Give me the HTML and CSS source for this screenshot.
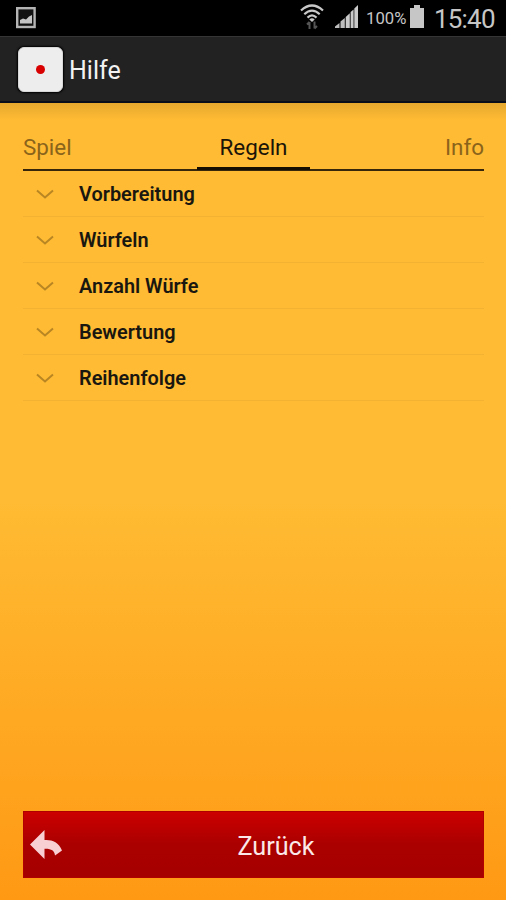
FILE: index.html
```html
<!DOCTYPE html>
<html lang="de">
<head>
    <meta charset="UTF-8">
    <meta name="viewport" content="width=device-width, initial-scale=1.0">
    <title>Hilfe</title>
    <link rel="stylesheet" href="styles.css">
</head>
<body>
    <div class="statusbar">
        <svg class="picture" width="20" height="22" viewBox="0 0 20 22">
            <rect x="1.2" y="1.2" width="17.4" height="18.8" fill="#111" stroke="#b4b4b4" stroke-width="2.4"/>
            <path d="M4 16.500V13l3-1.500 3 1 3-3 3-1.500v8.500z" fill="#c4c4c4"/>
        </svg>
        <div class="status-right">
            <svg class="wifi" width="24" height="26" viewBox="0 0 24 26">
                <g fill="none" stroke="#c8c8c8" stroke-width="2.200">
                    <path d="M1 6.500Q12-3.500 23 6.500"/>
                    <path d="M4.300 10.200Q12 3 19.700 10.200"/>
                    <path d="M7.500 13.600Q12 9.300 16.500 13.600"/>
                </g>
                <path d="M9.300 15.500Q12 13.200 14.700 15.500L12 18z" fill="#c8c8c8"/>
                <path d="M9.500 25v-7M7 20.500l2.500-2.500M14.500 17.500v7M17 22l-2.500 2.500" fill="none" stroke="#555" stroke-width="2"/>
            </svg>
            <svg class="signal" width="24" height="24" viewBox="0 0 24 24">
                <path d="M0 23v-1.500L4.500 18v5zM5.500 23v-6.500l4.300-3.500v10z" fill="#bdbdbd"/>
                <path d="M10.700 23V12l4.100-3.800V23zM15.600 23V7l3-2.600V23zM19.300 23V3.500L23 0v23z" fill="#cacaca"/>
            </svg>
            <span class="percent">100%</span>
            <svg class="battery" width="14" height="23" viewBox="0 0 14 23">
                <path d="M4 0h6v3h4v20H0V3h4z" fill="#c6c6c6"/>
            </svg>
            <span class="clock">15:40</span>
        </div>
    </div>

    <div class="header">
        <div class="dice"><span class="dot"></span></div>
        <span class="title">Hilfe</span>
    </div>

    <div class="content">
        <div class="tabs">
            <div class="tab">Spiel</div>
            <div class="tab active">Regeln</div>
            <div class="tab last">Info</div>
        </div>

        <ul class="list">
            <li><svg class="arrow" width="18" height="10" viewBox="0 0 18 10"><path d="M1 1.500l8 7 8-7"/></svg>Vorbereitung</li>
            <li><svg class="arrow" width="18" height="10" viewBox="0 0 18 10"><path d="M1 1.500l8 7 8-7"/></svg>Würfeln</li>
            <li><svg class="arrow" width="18" height="10" viewBox="0 0 18 10"><path d="M1 1.500l8 7 8-7"/></svg>Anzahl Würfe</li>
            <li><svg class="arrow" width="18" height="10" viewBox="0 0 18 10"><path d="M1 1.500l8 7 8-7"/></svg>Bewertung</li>
            <li><svg class="arrow" width="18" height="10" viewBox="0 0 18 10"><path d="M1 1.500l8 7 8-7"/></svg>Reihenfolge</li>
        </ul>

        <button class="back">
            <svg width="32" height="29" viewBox="0 0 32 29">
                <path d="M0 14.500L14.500 0v10C22 9.500 28.500 12 32 20.500L25 25.500C24.500 20.500 21 18.500 14.500 18.800V29z" fill="#f8d0d4"/>
            </svg>
            <span>Zurück</span>
        </button>
    </div>
</body>
</html>
```
FILE: styles.css
```css
*{
    box-sizing: border-box;
}

body{
    margin: 0;
    height: 900px;
    display: flex;
    flex-direction: column;
    font-family: Roboto, sans-serif;
    background-color: black;
}

.statusbar{
    height: 36px;
    padding: 0 11px 0 16px;
    display: flex;
    justify-content: space-between;
    color: #c6c6c6;
}

.picture{
    margin-top: 7px;
}

.status-right{
    display: flex;
}

.wifi{
    margin: 4px 11px 0 0;
}

.signal{
    margin: 5px 7px 0 0;
}

.percent{
    width: 41px;
    margin-right: 3px;
    font-size: 16.7px;
    line-height: 38px;
    white-space: nowrap;
}

.battery{
    margin: 5px 10px 0 0;
}

.clock{
    width: 61px;
    font-size: 26px;
    line-height: 38px;
    letter-spacing: -0.8px;
}

.header{
    height: 67px;
    padding: 1px 18px 0;
    display: flex;
    align-items: center;
    background-color: #222;
    border-top: 1px solid #353535;
    border-bottom: 2px solid #080d1c;
}

.dice{
    width: 45px;
    height: 45px;
    margin-right: 6px;
    display: flex;
    align-items: center;
    justify-content: center;
    border-radius: 6px;
    background-color: #ededed;
    border: 1px solid #d8d8d8;
    box-shadow: 0 0 2px 1px black;
}

.dot{
    width: 9px;
    height: 9px;
    border-radius: 50%;
    background-color: #d80000;
}

.title{
    padding-top: 2px;
    color: #f2f2f2;
    font-size: 25px;
}

.content{
    flex: 1;
    padding: 24px 22px 22px 23px;
    display: flex;
    flex-direction: column;
    background: linear-gradient(rgba(0, 0, 0, 0.1), rgba(0, 0, 0, 0) 17px),
                linear-gradient(#ffbb33, #ffbb33 50%, #ff9914);
}

.tabs{
    height: 44px;
    display: flex;
    justify-content: space-between;
    border-bottom: 2px solid #38260a;
    font-size: 22.4px;
    line-height: 41px;
}

.tab{
    flex: 1;
    color: #8a641b;
}

.active{
    flex: 0 0 113px;
    height: 43px;
    text-align: center;
    color: #1b1408;
    border-bottom: 3px solid #160e00;
}

.last{
    text-align: right;
}

.list{
    margin: 0;
    padding: 0;
    list-style: none;
}

.list li{
    height: 46px;
    padding: 2px 0 0 13px;
    display: flex;
    align-items: center;
    font-size: 19.9px;
    font-weight: 600;
    color: #191710;
    border-bottom: 1px solid #f3b231;
}

.arrow{
    margin: 0 25px 2px 0;
    fill: none;
    stroke: #b98624;
    stroke-width: 2;
}

.back{
    height: 67px;
    margin-top: auto;
    padding: 0 0 0 6px;
    display: flex;
    align-items: center;
    border: 1px solid #b00000;
    background: linear-gradient(#cc0000, #aa0000 50%, #a60000);
    color: #fbe9e9;
    font-family: inherit;
    font-size: 25.2px;
}

.back span{
    flex: 1;
    padding-top: 3px;
    margin-left: 7px;
    text-align: center;
}
```
